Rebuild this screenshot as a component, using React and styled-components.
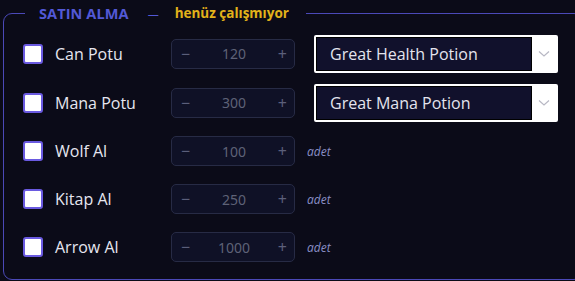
import React from "react";
import styled, { createGlobalStyle } from "styled-components";

const GlobalStyle = createGlobalStyle`
  body {
    margin: 0;
    background: #0b0b18;
    font-family: "Open Sans", "Noto Sans", sans-serif;
  }
`;

const items = [
  { label: "Can Potu", value: 120, select: "Great Health Potion" },
  { label: "Mana Potu", value: 300, select: "Great Mana Potion" },
  { label: "Wolf Al", value: 100 },
  { label: "Kitap Al", value: 250 },
  { label: "Arrow Al", value: 1000 },
];

function Chevron() {
  return (
    <svg width="12" height="8" viewBox="0 0 12 8">
      <path d="M1 1.5 L6 6 L11 1.5" fill="none" stroke="#b8b8c4" strokeWidth="1.2" />
    </svg>
  );
}

function App() {
  return (
    <Page>
      <GlobalStyle />
      <Box>
        <Legend>
          <Title>SATIN ALMA</Title>
          <Dash>—</Dash>
          <Note>henüz çalışmıyor</Note>
        </Legend>
        {items.map((it) => (
          <Row key={it.label} $tall={!!it.select}>
            <Check />
            <Label>{it.label}</Label>
            <Spinner>
              <SpinBtn>−</SpinBtn>
              <SpinValue>{it.value}</SpinValue>
              <SpinBtn>+</SpinBtn>
            </Spinner>
            {it.select ? (
              <Select>
                <SelectValue>{it.select}</SelectValue>
                <SelectArrow>
                  <Chevron />
                </SelectArrow>
              </Select>
            ) : (
              <Unit>adet</Unit>
            )}
          </Row>
        ))}
      </Box>
    </Page>
  );
}

export default App;

const Page = styled.div`
  padding: 0 0 0 3px;
  height: 281px;
  box-sizing: border-box;
`;

const Box = styled.fieldset`
  margin: 0;
  width: 580px;
  height: 280px;
  box-sizing: border-box;
  border: 1.5px solid #4b49b8;
  border-radius: 9px;
  padding: 3px 0 0 19px;
`;

const Legend = styled.legend`
  display: flex;
  align-items: center;
  height: 26px;
  padding: 0 17px 0 14px;
  margin-left: 2px;
  font-weight: 700;
`;

const Title = styled.span`
  color: #5258d6;
  font-size: 14.5px;
  letter-spacing: 0.1px;
`;

const Dash = styled.span`
  color: #5258d6;
  margin: 0 16px 0 19px;
  font-size: 11px;
  font-weight: 400;
`;

const Note = styled.span`
  color: #e2b21a;
  font-size: 13.5px;
`;

const Row = styled.div`
  display: flex;
  align-items: center;
  height: ${(p) => (p.$tall ? "49px" : "48px")};
`;

const Check = styled.span`
  width: 16px;
  height: 16px;
  background: #ffffff;
  border: 2px solid #6a5ae0;
  border-radius: 3px;
  flex-shrink: 0;
`;

const Label = styled.span`
  width: 116px;
  margin-left: 12px;
  color: #e6e6f0;
  font-size: 16px;
`;

const Spinner = styled.div`
  display: flex;
  align-items: center;
  justify-content: space-between;
  width: 124px;
  height: 30px;
  box-sizing: border-box;
  border: 1px solid #272b45;
  border-radius: 5px;
  background: #0f1126;
  padding: 0 7px 0 9px;
  font-family: "Noto Sans", sans-serif;
`;

const SpinBtn = styled.span`
  color: #5b5f7a;
  font-size: 16px;
`;

const SpinValue = styled.span`
  color: #5e6277;
  font-size: 14px;
`;

const Select = styled.div`
  display: flex;
  margin-left: 19px;
  width: 244px;
  height: 38px;
  box-sizing: border-box;
  background: #ffffff;
  border: 2px solid #ffffff;
  border-radius: 2px;
`;

const SelectValue = styled.div`
  flex: 1;
  display: flex;
  align-items: center;
  background: #11112c;
  border: 1px solid #000000;
  padding-left: 13px;
  color: #e4e4ee;
  font-size: 16px;
`;

const SelectArrow = styled.div`
  width: 24px;
  display: flex;
  align-items: center;
  justify-content: center;
`;

const Unit = styled.span`
  margin-left: 12px;
  color: #8a8fc6;
  font-size: 12px;
  font-style: italic;
`;
